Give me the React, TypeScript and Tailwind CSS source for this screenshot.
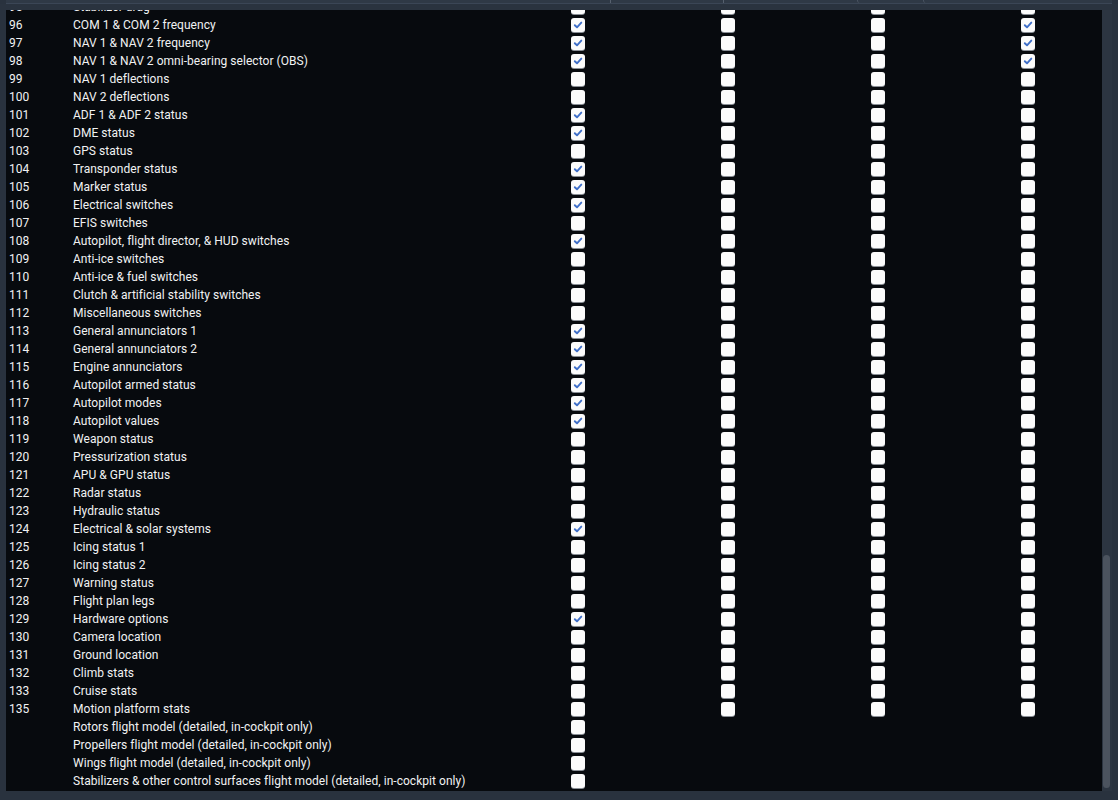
type Row = {
	id: string;
	label: string;
	checks: (boolean | null)[];
};

const rows: Row[] = [
	{ id: "95", label: "Stabilizer drag", checks: [false, false, false, false] },
	{ id: "96", label: "COM 1 & COM 2 frequency", checks: [true, false, false, true] },
	{ id: "97", label: "NAV 1 & NAV 2 frequency", checks: [true, false, false, true] },
	{ id: "98", label: "NAV 1 & NAV 2 omni-bearing selector (OBS)", checks: [true, false, false, true] },
	{ id: "99", label: "NAV 1 deflections", checks: [false, false, false, false] },
	{ id: "100", label: "NAV 2 deflections", checks: [false, false, false, false] },
	{ id: "101", label: "ADF 1 & ADF 2 status", checks: [true, false, false, false] },
	{ id: "102", label: "DME status", checks: [true, false, false, false] },
	{ id: "103", label: "GPS status", checks: [false, false, false, false] },
	{ id: "104", label: "Transponder status", checks: [true, false, false, false] },
	{ id: "105", label: "Marker status", checks: [true, false, false, false] },
	{ id: "106", label: "Electrical switches", checks: [true, false, false, false] },
	{ id: "107", label: "EFIS switches", checks: [false, false, false, false] },
	{ id: "108", label: "Autopilot, flight director, & HUD switches", checks: [true, false, false, false] },
	{ id: "109", label: "Anti-ice switches", checks: [false, false, false, false] },
	{ id: "110", label: "Anti-ice & fuel switches", checks: [false, false, false, false] },
	{ id: "111", label: "Clutch & artificial stability switches", checks: [false, false, false, false] },
	{ id: "112", label: "Miscellaneous switches", checks: [false, false, false, false] },
	{ id: "113", label: "General annunciators 1", checks: [true, false, false, false] },
	{ id: "114", label: "General annunciators 2", checks: [true, false, false, false] },
	{ id: "115", label: "Engine annunciators", checks: [true, false, false, false] },
	{ id: "116", label: "Autopilot armed status", checks: [true, false, false, false] },
	{ id: "117", label: "Autopilot modes", checks: [true, false, false, false] },
	{ id: "118", label: "Autopilot values", checks: [true, false, false, false] },
	{ id: "119", label: "Weapon status", checks: [false, false, false, false] },
	{ id: "120", label: "Pressurization status", checks: [false, false, false, false] },
	{ id: "121", label: "APU & GPU status", checks: [false, false, false, false] },
	{ id: "122", label: "Radar status", checks: [false, false, false, false] },
	{ id: "123", label: "Hydraulic status", checks: [false, false, false, false] },
	{ id: "124", label: "Electrical & solar systems", checks: [true, false, false, false] },
	{ id: "125", label: "Icing status 1", checks: [false, false, false, false] },
	{ id: "126", label: "Icing status 2", checks: [false, false, false, false] },
	{ id: "127", label: "Warning status", checks: [false, false, false, false] },
	{ id: "128", label: "Flight plan legs", checks: [false, false, false, false] },
	{ id: "129", label: "Hardware options", checks: [true, false, false, false] },
	{ id: "130", label: "Camera location", checks: [false, false, false, false] },
	{ id: "131", label: "Ground location", checks: [false, false, false, false] },
	{ id: "132", label: "Climb stats", checks: [false, false, false, false] },
	{ id: "133", label: "Cruise stats", checks: [false, false, false, false] },
	{ id: "135", label: "Motion platform stats", checks: [false, false, false, false] },
	{ id: "", label: "Rotors flight model (detailed, in-cockpit only)", checks: [false, null, null, null] },
	{ id: "", label: "Propellers flight model (detailed, in-cockpit only)", checks: [false, null, null, null] },
	{ id: "", label: "Wings flight model (detailed, in-cockpit only)", checks: [false, null, null, null] },
	{ id: "", label: "Stabilizers & other control surfaces flight model (detailed, in-cockpit only)", checks: [false, null, null, null] },
];

function Box({ checked }: { checked: boolean }) {
	return (
		<div className="w-[14px] h-[14px] rounded-[3px] bg-[#fbfbfb] shadow-[0_1px_0_#8a8f96] flex items-center justify-center">
			{checked && (
				<svg width="10" height="10" viewBox="0 0 10 10">
					<path d="M1.8 5.2 L4 7.3 L8.3 2.6" fill="none" stroke="#3f6fc9" strokeWidth="1.9" strokeLinecap="round" strokeLinejoin="round" />
				</svg>
			)}
		</div>
	);
}

export default function App() {
	return (
		<div className="w-[1118px] h-[800px] bg-[#29323e] overflow-hidden flex flex-col" style={{ fontFamily: "Roboto, 'Liberation Sans', sans-serif" }}>
			{/* Header strip (mostly scrolled off) */}
			<div className="h-[10px] flex flex-col">
				<div className="h-[4px] mx-[6px] flex border-b border-[#3b4656] bg-[#2f3946]">
					<div className="w-[604px]"></div>
					<div className="w-[113px] border-l border-[#56606e]"></div>
					<div className="w-[134px] border-l border-[#56606e]"></div>
					<div className="w-[66px] border-l border-[#4b5563] rounded-bl-[3px]"></div>
					<div className="w-[60px] border-l border-[#4b5563] rounded-bl-[3px]"></div>
				</div>
				<div className="flex-1 bg-[#2a333f]"></div>
			</div>

			{/* Body */}
			<div className="h-[781px] flex pl-[6px]">
				<div className="w-[1096px] h-full bg-[#070a0e] overflow-hidden">
					<div className="mt-[-12px] pl-[3px] text-[12px] leading-[18px] tracking-[0.04px] text-[#f1f2f3]">
						{rows.map((row, idx) => (
							<div key={idx} className="grid grid-cols-[64px_498px_150px_150px_150px_1fr] h-[18px] items-center">
								<div>{row.id}</div>
								<div className="whitespace-nowrap">{row.label}</div>
								{row.checks.map((c, i) => (
									<div key={i}>{c !== null && <Box checked={c} />}</div>
								))}
							</div>
						))}
					</div>
				</div>

				{/* Scrollbar */}
				<div className="w-[10px] h-full bg-[#2c3541] pt-[545px] pl-[1px]">
					<div className="w-[7px] h-[233px] rounded-full bg-[#4b535e]"></div>
				</div>
			</div>
		</div>
	);
}
